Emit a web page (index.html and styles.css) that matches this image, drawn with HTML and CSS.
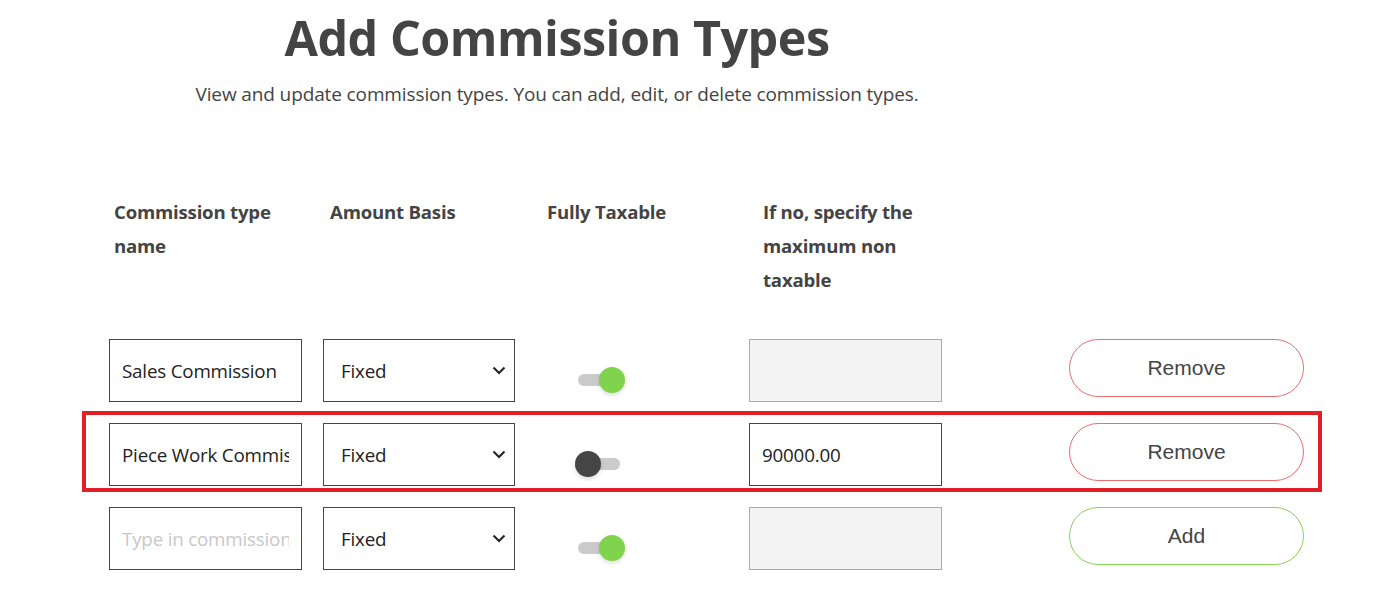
FILE: index.html
```html
<!DOCTYPE html>
<html lang="en">
<head>
<meta charset="utf-8">
<title>Add Commission Types</title>
<link rel="stylesheet" href="styles.css">
</head>
<body>
<div class="page">
  <header class="head">
    <h1 class="title">Add Commission Types</h1>
    <p class="subtitle">View and update commission types. You can add, edit, or delete commission types.</p>
  </header>

  <div class="cols">
    <div class="col-h">Commission type name</div>
    <div class="col-h">Amount Basis</div>
    <div class="col-h">Fully Taxable</div>
    <div class="col-h">If no, specify the maximum non taxable</div>
  </div>

  <div class="rows">
    <div class="row">
      <input class="field" type="text" value="Sales Commission">
      <div class="select"><span>Fixed</span><svg class="chev" width="14" height="9" viewBox="0 0 14 9"><path d="M1.5 1.5 7 7l5.5-5.5" fill="none" stroke="#222" stroke-width="2"/></svg></div>
      <div class="tcell"><span class="switch on"><span class="track"></span><span class="knob"></span></span></div>
      <div class="amount disabled"></div>
      <button class="btn remove">Remove</button>
    </div>

    <div class="row marked">
      <input class="field" type="text" value="Piece Work Commission">
      <div class="select"><span>Fixed</span><svg class="chev" width="14" height="9" viewBox="0 0 14 9"><path d="M1.5 1.5 7 7l5.5-5.5" fill="none" stroke="#222" stroke-width="2"/></svg></div>
      <div class="tcell"><span class="switch off"><span class="track"></span><span class="knob"></span></span></div>
      <div class="amount">90000.00</div>
      <button class="btn remove">Remove</button>
    </div>

    <div class="row">
      <input class="field" type="text" placeholder="Type in commission type name">
      <div class="select"><span>Fixed</span><svg class="chev" width="14" height="9" viewBox="0 0 14 9"><path d="M1.5 1.5 7 7l5.5-5.5" fill="none" stroke="#222" stroke-width="2"/></svg></div>
      <div class="tcell"><span class="switch on"><span class="track"></span><span class="knob"></span></span></div>
      <div class="amount disabled"></div>
      <button class="btn add">Add</button>
    </div>
  </div>
</div>
</body>
</html>
```

FILE: styles.css
```css
*, *::before, *::after { box-sizing: border-box; }

body {
  margin: 0;
  background: #fff;
  font-family: "Open Sans", "Noto Sans", sans-serif;
  color: #444;
}

.head {
  width: 896px;
  margin-left: 109px;
  text-align: center;
}

.title {
  margin: 0;
  padding-top: 6px;
  font-size: 48.5px;
  line-height: 62px;
  font-weight: 700;
  color: #444;
  letter-spacing: -0.5px;
}

.subtitle {
  margin: 12px 0 0;
  font-size: 19px;
  line-height: 28px;
  color: #444;
  letter-spacing: -0.12px;
}

.cols {
  display: grid;
  grid-template-columns: 216px 217px 216px 200px;
  margin: 87px 0 0 114px;
}

.col-h {
  font-size: 18.6px;
  font-weight: 700;
  line-height: 34px;
  color: #444;
  padding-right: 30px;
  letter-spacing: -0.2px;
}

.rows {
  display: flex;
  flex-direction: column;
  gap: 21px;
  margin: 42px 0 0 109px;
}

.row {
  position: relative;
  display: grid;
  grid-template-columns: 214px 192px 234px 320px 235px;
  height: 63px;
  align-items: center;
}

.row.marked::before {
  content: "";
  position: absolute;
  left: -27px;
  top: -12px;
  width: 1240px;
  height: 81px;
  border: 4px solid #e31e24;
  pointer-events: none;
}

.field {
  width: 193px;
  height: 63px;
  border: 1px solid #444;
  border-radius: 0;
  padding: 0 12px;
  font-family: "Open Sans", "Noto Sans", sans-serif;
  font-size: 18.8px;
  color: #222;
  letter-spacing: -0.2px;
  background: #fff;
  outline: none;
}

.field::placeholder {
  color: #c8c8c8;
}

.select {
  height: 63px;
  border: 1px solid #444;
  display: flex;
  align-items: center;
  justify-content: space-between;
  padding: 0 8px 0 17px;
  font-size: 18.8px;
  letter-spacing: -0.2px;
  color: #222;
}

.tcell {
  display: flex;
  align-items: center;
  padding-left: 63px;
  padding-top: 19px;
  height: 63px;
}

.switch {
  position: relative;
  display: block;
  width: 47px;
  height: 26px;
}

.track {
  position: absolute;
  left: 0;
  top: 7px;
  width: 42px;
  height: 12px;
  border-radius: 6px;
  background: #cbcbcb;
}

.knob {
  position: absolute;
  top: 0;
  width: 26px;
  height: 26px;
  border-radius: 50%;
  box-shadow: 0 2px 4px rgba(0, 0, 0, 0.15);
}

.switch.on .knob {
  left: 21px;
  background: #80d34c;
}

.switch.off .knob {
  left: -3px;
  background: #454545;
}

.amount {
  width: 193px;
  height: 63px;
  border: 1px solid #444;
  display: flex;
  align-items: center;
  padding: 0 12px;
  font-size: 18.8px;
  letter-spacing: -0.2px;
  color: #222;
  background: #fff;
}

.amount.disabled {
  background: #f4f4f4;
  border-color: #aaa;
}

.btn {
  align-self: start;
  width: 235px;
  height: 58px;
  border-radius: 29px;
  background: #fff;
  font-family: "Liberation Sans", Arial, sans-serif;
  font-size: 21px;
  color: #444;
  cursor: pointer;
}

.btn.remove {
  border: 1px solid #e86f6f;
}

.btn.add {
  border: 1px solid #86d256;
}
```
